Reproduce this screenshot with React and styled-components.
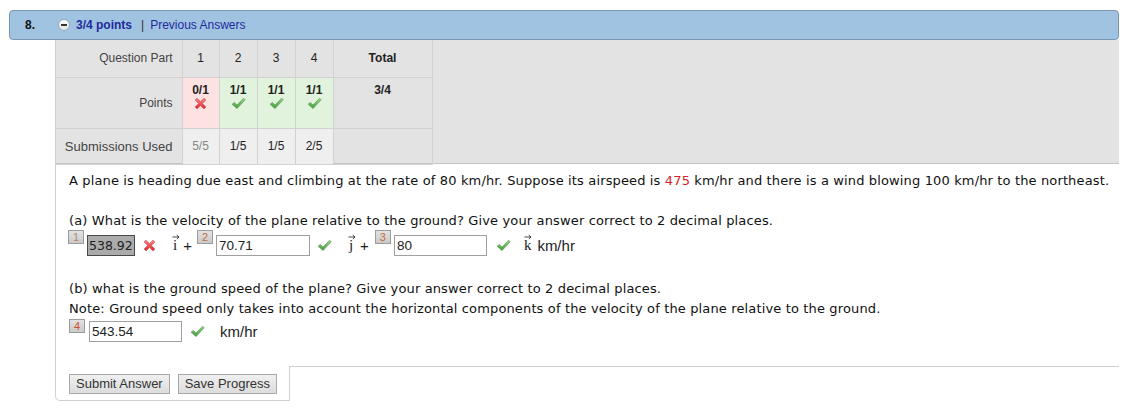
import React from "react";
import styled, { createGlobalStyle } from "styled-components";

const Global = createGlobalStyle`
  html, body { margin: 0; padding: 0; background: #fff; }
  body { font-family: "Liberation Sans", Arial, sans-serif; }
`;

const Page = styled.div`
  width: 1110px;
  padding: 10px 0 0 9px;
`;

const Header = styled.div`
  display: flex;
  align-items: center;
  height: 28px;
  background: #a1c3e2;
  border: 1px solid #7a95b0;
  border-radius: 4px;
  padding-left: 15px;
  font-size: 12px;
  color: #1e2a9c;
`;

const Num = styled.span`
  width: 33px;
  font-weight: bold;
  color: #111;
`;

const Pts = styled.span`
  font-weight: bold;
  margin-left: 6px;
`;

const Sep = styled.span`
  color: #333;
  margin: 0 6px 0 9px;
`;

const Body = styled.div`
  margin-left: 46px;
`;

const Scoreboard = styled.div`
  background: #e3e3e3;
  border-left: 1px solid #cfcfcf;
  border-bottom: 1px solid #c4c4c4;
  height: 123px;
`;

const Table = styled.table`
  border-collapse: collapse;
  font-size: 12px;
  color: #222;
`;

const Cell = styled.td`
  border: 1px solid #d2d2d2;
  border-top: none;
  border-left: ${(p) => (p.$first ? "none" : "1px solid #d2d2d2")};
  width: ${(p) => p.$w}px;
  height: ${(p) => p.$h}px;
  padding: 0;
  text-align: ${(p) => p.$align || "center"};
  vertical-align: ${(p) => p.$valign || "middle"};
  background: ${(p) => p.$bg || "transparent"};
  font-weight: ${(p) => (p.$bold ? "bold" : "normal")};
  font-size: ${(p) => p.$fs || 12}px;
  color: ${(p) => p.$color || "#222"};
  padding-right: ${(p) => (p.$align === "right" ? "9px" : "0")};
  padding-top: ${(p) => (p.$valign === "top" ? "5px" : "0")};
  box-sizing: border-box;
`;

const Stack = styled.div`
  display: flex;
  flex-direction: column;
  align-items: center;
  gap: 0;
  line-height: 14px;
`;

const Content = styled.div`
  border-left: 1px solid #cfcfcf;
  padding: 7px 0 19px 13px;
  font-family: "DejaVu Sans", Verdana, sans-serif;
  font-size: 13px;
  letter-spacing: 0.14px;
  color: #111;
`;

const Line = styled.div`
  line-height: 20px;
  height: 20px;
  margin-top: ${(p) => p.$mt || 0}px;
  white-space: nowrap;
`;

const Red = styled.span`
  color: #d21f2b;
`;

const AnswerRow = styled.div`
  display: flex;
  align-items: flex-start;
  height: 28px;
  margin-left: ${(p) => p.$ml || 0}px;
  margin-top: ${(p) => p.$mt || 0}px;
  letter-spacing: 0;
`;

const Badge = styled.span`
  box-sizing: border-box;
  flex: none;
  width: 16px;
  height: 14px;
  margin-left: ${(p) => p.$ml || 0}px;
  background: linear-gradient(#e2e2e2, #cacaca);
  border: 1px solid #9c9c9c;
  font-family: "Liberation Sans", Arial, sans-serif;
  font-size: 11px;
  line-height: 12px;
  text-align: center;
  color: ${(p) => p.$color || "#c2703a"};
`;

const Field = styled.span`
  box-sizing: border-box;
  flex: none;
  width: ${(p) => p.$w}px;
  height: 21px;
  margin-left: ${(p) => p.$ml || 3}px;
  margin-top: ${(p) => p.$mt ?? 5}px;
  border: 1px solid ${(p) => (p.$locked ? "#4a4a4a" : "#a0a0a0")};
  background: ${(p) => (p.$locked ? "#ababab" : "#fff")};
  font-family: ${(p) =>
    p.$locked ? `"DejaVu Sans", Verdana, sans-serif` : `"Liberation Sans", Arial, sans-serif`};
  font-size: ${(p) => (p.$locked ? 12.5 : 13.5)}px;
  line-height: 19px;
  padding-left: ${(p) => (p.$locked ? 1 : 2)}px;
  color: #222;
  white-space: nowrap;
`;

const IconBox = styled.span`
  display: flex;
  flex: none;
  margin-left: ${(p) => p.$ml || 0}px;
  margin-top: ${(p) => p.$mt || 9}px;
`;

const Txt = styled.span`
  margin-left: ${(p) => p.$ml || 0}px;
  margin-top: ${(p) => p.$mt ?? 5}px;
  line-height: 21px;
  font-family: "Liberation Sans", Arial, sans-serif;
  font-size: 15px;
  color: #222;
  white-space: pre;
`;

const Vec = styled.span`
  position: relative;
  margin-left: ${(p) => p.$ml || 0}px;
  margin-top: 5px;
  line-height: 21px;
  font-family: "Liberation Serif", "Times New Roman", serif;
  font-size: 15px;
  color: #222;
`;

const VecArrow = styled.svg`
  position: absolute;
  left: ${(p) => p.$l || 0}px;
  top: -1px;
`;

const Footer = styled.div`
  display: flex;
`;

const ButtonBox = styled.div`
  display: flex;
  gap: 8px;
  width: 235px;
  box-sizing: border-box;
  padding: 8px 0 6px 13px;
  border-left: 1px solid #cfcfcf;
  border-right: 1px solid #cfcfcf;
  border-bottom: 1px solid #cfcfcf;
  border-bottom-left-radius: 5px;
`;

const Filler = styled.div`
  flex: 1;
  border-top: 1px solid #cfcfcf;
`;

const Button = styled.button`
  height: 20px;
  padding: 0 6px;
  border: 1px solid #a9a9a9;
  border-radius: 0;
  background: linear-gradient(#f0f0f0, #dcdcdc);
  font-family: "Liberation Sans", Arial, sans-serif;
  font-size: 13px;
  color: #333;
  line-height: 18px;
`;

function Check() {
  return (
    <svg width="15" height="13" viewBox="0 0 15 13">
      <defs>
        <linearGradient id="cg" x1="0" y1="0" x2="0" y2="1">
          <stop offset="0" stopColor="#9bd48e" />
          <stop offset="1" stopColor="#3f9a3a" />
        </linearGradient>
      </defs>
      <path
        d="M1 7.2 L3.4 5.4 L6 8 L12.6 1.2 L14.2 2.8 L6 11.6 Z"
        fill="url(#cg)"
        stroke="#4f9a48"
        strokeWidth="0.6"
        strokeLinejoin="round"
      />
    </svg>
  );
}

function Cross() {
  return (
    <svg width="13" height="13" viewBox="0 0 13 13">
      <defs>
        <linearGradient id="xg" x1="0" y1="0" x2="0" y2="1">
          <stop offset="0" stopColor="#f58a8a" />
          <stop offset="1" stopColor="#d8262c" />
        </linearGradient>
      </defs>
      <path
        d="M1 3 L3 1 L6.5 4.5 L10 1 L12 3 L8.5 6.5 L12 10 L10 12 L6.5 8.5 L3 12 L1 10 L4.5 6.5 Z"
        fill="url(#xg)"
        stroke="#d94b4f"
        strokeWidth="0.5"
        strokeLinejoin="round"
      />
    </svg>
  );
}

function MinusIcon() {
  return (
    <svg width="12" height="12" viewBox="0 0 12 12">
      <defs>
        <linearGradient id="mg" x1="0" y1="0" x2="0" y2="1">
          <stop offset="0" stopColor="#ffffff" />
          <stop offset="1" stopColor="#dde3e8" />
        </linearGradient>
      </defs>
      <circle cx="6" cy="6" r="5.5" fill="url(#mg)" stroke="#8e9aa6" strokeWidth="0.8" />
      <rect x="3" y="5" width="6" height="2" fill="#333" />
    </svg>
  );
}

function Arrow({ l }) {
  return (
    <VecArrow $l={l} width="8" height="6" viewBox="0 0 8 6">
      <path d="M0.5 3 H7 M4.8 1 L7 3 L4.8 5" stroke="#333" strokeWidth="0.9" fill="none" />
    </VecArrow>
  );
}

const parts = [
  { pts: "0/1", ok: false, sub: "5/5", w: 37 },
  { pts: "1/1", ok: true, sub: "1/5", w: 38 },
  { pts: "1/1", ok: true, sub: "1/5", w: 38 },
  { pts: "1/1", ok: true, sub: "2/5", w: 38 },
];

export default function App() {
  return (
    <>
      <Global />
      <Page>
        <Header>
          <Num>8.</Num>
          <MinusIcon />
          <Pts>3/4 points</Pts>
          <Sep>|</Sep>
          <span>Previous Answers</span>
        </Header>
        <Body>
          <Scoreboard>
            <Table>
              <tbody>
                <tr>
                  <Cell $first $w={126} $h={37} $align="right" $color="#444">
                    Question Part
                  </Cell>
                  {parts.map((p, i) => (
                    <Cell key={i} $w={p.w} $h={37}>
                      {i + 1}
                    </Cell>
                  ))}
                  <Cell $w={99} $h={37} $bold>
                    Total
                  </Cell>
                </tr>
                <tr>
                  <Cell $first $w={126} $h={51} $align="right" $color="#444">
                    Points
                  </Cell>
                  {parts.map((p, i) => (
                    <Cell
                      key={i}
                      $w={p.w}
                      $h={51}
                      $valign="top"
                      $bg={p.ok ? "#e2f3dd" : "#fde2e2"}
                      $bold
                    >
                      <Stack>
                        {p.pts}
                        {p.ok ? <Check /> : <Cross />}
                      </Stack>
                    </Cell>
                  ))}
                  <Cell $w={99} $h={51} $valign="top" $bold>
                    3/4
                  </Cell>
                </tr>
                <tr>
                  <Cell $first $w={126} $h={36} $align="right" $color="#444" $fs={13}>
                    Submissions Used
                  </Cell>
                  {parts.map((p, i) => (
                    <Cell
                      key={i}
                      $w={p.w}
                      $h={36}
                      $bg="#efefef"
                      $color={i === 0 ? "#888" : "#222"}
                    >
                      {p.sub}
                    </Cell>
                  ))}
                  <Cell $w={99} $h={36} />
                </tr>
              </tbody>
            </Table>
          </Scoreboard>
          <Content>
            <Line>
              A plane is heading due east and climbing at the rate of 80 km/hr. Suppose its airspeed is{" "}
              <Red>475</Red> km/hr and there is a wind blowing 100 km/hr to the northeast.
            </Line>
            <Line $mt={20}>
              (a) What is the velocity of the plane relative to the ground? Give your answer correct to 2
              decimal places.
            </Line>
            <AnswerRow $ml={-1} $mt={-1}>
              <Badge $color="#b08a6a">1</Badge>
              <Field $locked $w={48}>538.92</Field>
              <IconBox $ml={8}>
                <Cross />
              </IconBox>
              <Vec $ml={17}>
                i<Arrow l={-1} />
              </Vec>
              <Txt $ml={6}>+</Txt>
              <Badge $ml={5}>2</Badge>
              <Field $w={94}>70.71</Field>
              <IconBox $ml={7}>
                <Check />
              </IconBox>
              <Vec $ml={17}>
                j<Arrow l={-1} />
              </Vec>
              <Txt $ml={7}>+</Txt>
              <Badge $ml={6}>3</Badge>
              <Field $w={93}>80</Field>
              <IconBox $ml={9}>
                <Check />
              </IconBox>
              <Vec $ml={13}>
                k<Arrow l={0} />
              </Vec>
              <Txt $ml={6}>km/hr</Txt>
            </AnswerRow>
            <Line $mt={21}>
              (b) what is the ground speed of the plane? Give your answer correct to 2 decimal places.
            </Line>
            <Line>
              Note: Ground speed only takes into account the horizontal components of the velocity of the
              plane relative to the ground.
            </Line>
            <AnswerRow>
              <Badge $color="#d0502a">4</Badge>
              <Field $w={93} $ml={4} $mt={2}>543.54</Field>
              <IconBox $ml={8} $mt={6}>
                <Check />
              </IconBox>
              <Txt $ml={15} $mt={2}>km/hr</Txt>
            </AnswerRow>
          </Content>
          <Footer>
            <ButtonBox>
              <Button>Submit Answer</Button>
              <Button>Save Progress</Button>
            </ButtonBox>
            <Filler />
          </Footer>
        </Body>
      </Page>
    </>
  );
}
